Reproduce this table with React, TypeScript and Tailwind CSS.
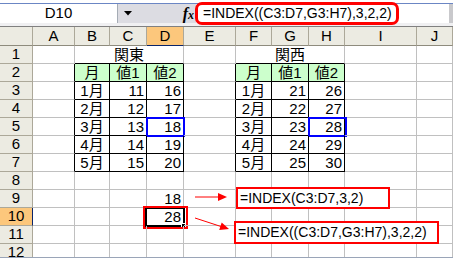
import type { ReactNode } from 'react'

const COLS = ['A', 'B', 'C', 'D', 'E', 'F', 'G', 'H', 'I', 'J']

// B..D = 関東, F..H = 関西  (row -> [月, 値1, 値2])
const kanto: Record<number, string[]> = {
  2: ['月', '値1', '値2'],
  3: ['1月', '11', '16'],
  4: ['2月', '12', '17'],
  5: ['3月', '13', '18'],
  6: ['4月', '14', '19'],
  7: ['5月', '15', '20'],
}
const kansai: Record<number, string[]> = {
  2: ['月', '値1', '値2'],
  3: ['1月', '21', '26'],
  4: ['2月', '22', '27'],
  5: ['3月', '23', '28'],
  6: ['4月', '24', '29'],
  7: ['5月', '25', '30'],
}

const inTable = (r: number, c: number) =>
  r >= 2 && r <= 7 && ((c >= 1 && c <= 3) || (c >= 5 && c <= 7))

function BlueBox() {
  return <div className="absolute left-[-1px] top-[-1px] w-[39px] h-[20px] border-2 border-[#0000ff]" />
}

function ActiveCell() {
  return (
    <>
      <div className="absolute left-[-2px] top-[-1px] w-[40px] h-[20px] border-2 border-black" />
      <div className="absolute right-[-3px] bottom-[-3px] w-[5px] h-[5px] bg-black border border-white" />
      <div className="absolute left-[-4px] top-[-2px] w-[45px] h-[23px] border-2 border-[#ff0000]" />
    </>
  )
}

function Cell({
  r,
  c,
  text,
  align = 'right',
  span,
  green,
  children,
}: {
  r: number
  c: number
  text?: string
  align?: 'left' | 'center' | 'right'
  span?: boolean
  green?: boolean
  children?: ReactNode
}) {
  const lastCol = span ? c + 2 : c
  const rightBlack = inTable(r, lastCol) || inTable(r, lastCol + 1)
  const bottomBlack = inTable(r, c) || inTable(r + 1, c)
  return (
    <div
      className={[
        'relative h-[18px] border-r border-b leading-[17px] text-[15px] whitespace-nowrap',
        rightBlack ? 'border-r-black' : 'border-r-[#c0c0c0]',
        bottomBlack ? 'border-b-black' : 'border-b-[#c0c0c0]',
        span ? 'col-span-3' : '',
        green ? 'bg-[#ccffcc]' : '',
        align === 'center' ? 'text-center' : align === 'right' ? 'text-right pr-[2px]' : 'pl-[2px]',
      ].join(' ')}
    >
      {text}
      {children}
    </div>
  )
}

function Row({ r }: { r: number }) {
  const cells: ReactNode[] = []
  cells.push(
    <div
      key="h"
      className={
        r === 10
          ? 'h-[18px] bg-[#fcc77c] border-r border-b border-r-[#0a246a] border-b-[#aca899] text-center leading-[16px] text-[15px]'
          : 'h-[18px] bg-[#ecebe2] border-r border-b border-r-[#aca899] border-b-[#aca899] text-center leading-[16px] text-[15px]'
      }
    >
      {r}
    </div>
  )
  for (let c = 0; c < COLS.length; c++) {
    if (r === 1 && (c === 2 || c === 3 || c === 6 || c === 7)) continue
    if (r === 1 && c === 1) {
      cells.push(<Cell key={c} r={r} c={c} span text="関東" align="center" />)
      continue
    }
    if (r === 1 && c === 5) {
      cells.push(<Cell key={c} r={r} c={c} span text="関西" align="center" />)
      continue
    }
    const data = c >= 1 && c <= 3 ? kanto[r] : c >= 5 && c <= 7 ? kansai[r] : undefined
    const idx = c >= 5 ? c - 5 : c - 1
    let text = data ? data[idx] : undefined
    let align: 'center' | 'right' = r === 2 || idx === 0 ? 'center' : 'right'
    if (c === 3 && r === 9) text = '18'
    if (c === 3 && r === 10) text = '28'
    if (!data) align = 'right'
    cells.push(
      <Cell key={c} r={r} c={c} text={text} align={align} green={r === 2 && !!data}>
        {r === 5 && (c === 3 || c === 7) && <BlueBox />}
        {r === 10 && c === 3 && <ActiveCell />}
      </Cell>
    )
  }
  return <>{cells}</>
}

export default function App() {
  return (
    <div className="relative w-[453px] h-[258px] overflow-hidden bg-white border-b border-[#9aa5b8] font-['Liberation_Sans','Noto_Sans_CJK_JP',sans-serif] text-black">
      {/* formula bar */}
      <div className="h-[24px] border-b border-[#808080] bg-[#f0f0f2]">
        <div className="mt-[3px] h-[20px] border-t border-[#6b86c4] flex">
          <div className="w-[118px] bg-white border-r border-[#a5acb5] flex items-center justify-center text-[15px]">
            D10
          </div>
          <div className="w-[78px] bg-[#dcdce2] flex items-center">
            <svg width="8" height="5" viewBox="0 0 8 5" className="ml-[6px]">
              <polygon points="0,0 8,0 4,4.5" fill="#000" />
            </svg>
            <span className="ml-auto mr-[2px] font-['Liberation_Serif',serif] italic font-bold text-[16px] leading-none">
              f<span className="text-[12px]">x</span>
            </span>
          </div>
          <div className="flex-1 bg-white flex items-center pl-[7px] text-[14px] whitespace-nowrap">
            =INDEX((C3:D7,G3:H7),3,2,2)
          </div>
          <div className="w-[4px] bg-[#c9c9cc]" />
        </div>
      </div>

      {/* sheet */}
      <div className="grid grid-cols-[33px_42px_35px_37px_37px_52px_36px_37px_36px_72px_1fr]">
        <div className="h-[19px] bg-[#ecebe2] border-r border-b border-r-[#aca899] border-b-[#8e8b7d]" />
        {COLS.map((l) => (
          <div
            key={l}
            className={
              l === 'D'
                ? 'h-[19px] bg-[#fcc77c] border-r border-b border-r-[#aca899] border-b-[#0a246a] text-center text-[15px] leading-[18px]'
                : 'h-[19px] bg-[#ecebe2] border-r border-b border-r-[#aca899] border-b-[#8e8b7d] text-center text-[15px] leading-[18px]'
            }
          >
            {l}
          </div>
        ))}
        {Array.from({ length: 12 }, (_, i) => (
          <Row key={i} r={i + 1} />
        ))}
      </div>

      {/* annotations */}
      <div className="absolute left-[195px] top-[2px] w-[204px] h-[23px] border-[3px] border-[#ff0000] rounded-[7px]" />

      <svg className="absolute left-0 top-0" width="453" height="258">
        <line x1="195" y1="197" x2="220" y2="197" stroke="#ff0000" strokeWidth="1" />
        <polygon points="218,193 227,197 218,201" fill="#ff0000" />
        <line x1="195" y1="218" x2="221" y2="226.5" stroke="#ff0000" strokeWidth="1" />
        <polygon points="221.7,222.4 229,229 219.2,230" fill="#ff0000" />
      </svg>

      <div className="absolute left-[236px] top-[187px] w-[154px] h-[22px] border-2 border-[#ff0000] bg-white pl-[2px] text-[14px] leading-[18px] whitespace-nowrap">
        =INDEX(C3:D7,3,2)
      </div>
      <div className="absolute left-[234px] top-[221px] w-[205px] h-[23px] border-2 border-[#ff0000] bg-white pl-[2px] text-[14px] leading-[19px] whitespace-nowrap">
        =INDEX((C3:D7,G3:H7),3,2,2)
      </div>
    </div>
  )
}
